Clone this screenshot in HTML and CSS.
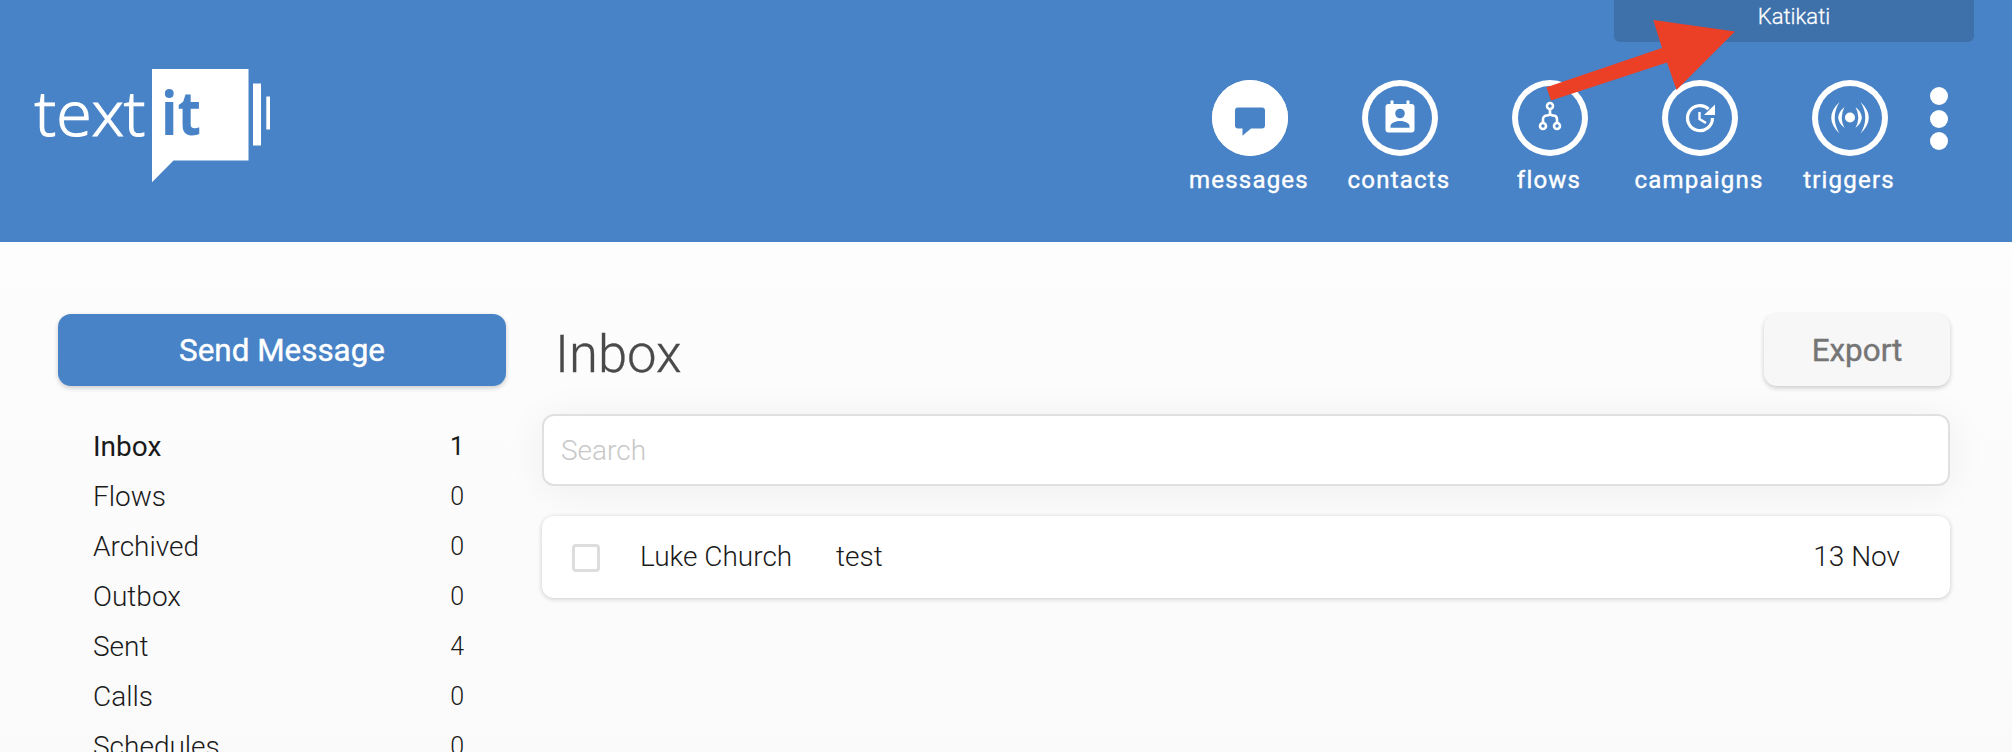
FILE: index.html
```html
<!DOCTYPE html>
<html lang="en">
<head>
<meta charset="utf-8">
<title>TextIt - Inbox</title>
<link rel="stylesheet" href="styles.css">
</head>
<body>
<header class="header">
  <svg class="logo" width="250" height="130" viewBox="30 60 250 130" role="img" aria-label="textit">
    <path class="fill-white" d="M152 69H248.500V160.500H173.500L152 182.300ZM253 83.500h8v62h-8ZM266.300 96.500h3.700v33h-3.700Z"/>
    <text class="logo-thin" x="34.500" y="136" textLength="111" lengthAdjust="spacingAndGlyphs">text</text>
    <text class="logo-bold" x="161" y="135" textLength="40" lengthAdjust="spacingAndGlyphs">it</text>
  </svg>
  <nav class="nav">
    <a class="nav-item">
      <span class="ring ring-active"><svg width="76" height="76" viewBox="-38 -38 76 76"><path class="fill-blue" d="M-12-10.500H12a3 3 0 0 1 3 3V7.500a3 3 0 0 1-3 3H1L-7.500 17.800V10.500H-12a3 3 0 0 1-3-3V-7.500a3 3 0 0 1 3-3Z"/></svg></span>
      <span class="nav-label">messages</span>
    </a>
    <a class="nav-item">
      <span class="ring"><svg width="76" height="76" viewBox="-38 -38 76 76"><path class="fill-white" d="M-9.500-17.500h3v3.500H6.500v-3.500h3v3.500H11.500a3 3 0 0 1 3 3V11.500a3 3 0 0 1-3 3H-11.500a3 3 0 0 1-3-3V-11a3 3 0 0 1 3-3h2Z"/><circle class="fill-blue" cx="0" cy="-4.500" r="4.800"/><path class="fill-blue" d="M-9.500 9.800V8C-9.500 4.500-3.500 3 0 3S9.500 4.500 9.500 8V9.800Z"/></svg></span>
      <span class="nav-label">contacts</span>
    </a>
    <a class="nav-item">
      <span class="ring"><svg width="76" height="76" viewBox="-38 -38 76 76"><g class="stroke-icon"><circle cx="0" cy="-12" r="3"/><circle cx="-7" cy="8" r="3"/><circle cx="7" cy="8" r="3"/><path d="M0-9V-4M-7 5V1.500C-7-1.500-5-2.500-3-2.500C-1-2.500 0-3.500 0-5C0-3.500 1-2.500 3-2.500C5-2.500 7-1.500 7 1.500V5"/></g></svg></span>
      <span class="nav-label">flows</span>
    </a>
    <a class="nav-item">
      <span class="ring"><svg width="76" height="76" viewBox="-38 -38 76 76"><g class="stroke-icon clock"><path d="M12.500 0A12.500 12.500 0 1 1 8.600-9"/><path class="hand" d="M-.500-6V1L6 5"/></g><path class="fill-white" d="M15-13.500V-3H4Z"/></svg></span>
      <span class="nav-label">campaigns</span>
    </a>
    <a class="nav-item">
      <span class="ring"><svg width="76" height="76" viewBox="-38 -38 76 76"><circle class="fill-white" cx="0" cy="-.500" r="5"/><path class="fill-white" d="M-10.500-16Q-27-.500-10.500 15.500Q-20-.500-10.500-16ZM10.500-16Q27-.500 10.500 15.500Q20-.500 10.500-16ZM-5.500-11Q-18-.500-5.500 10Q-11-.500-5.500-11ZM5.500-11Q18-.500 5.500 10Q11-.500 5.500-11Z"/></svg></span>
      <span class="nav-label">triggers</span>
    </a>
    <div class="more"><i></i><i></i><i></i></div>
  </nav>
  <div class="org">Katikati</div>
  <svg class="arrow" width="200" height="90" viewBox="1540 15 200 90"><path d="M1735 31.500 1653.300 20 1662 48 1546.500 87.300 1551 100.500 1667 62.500 1676.500 90Z"/></svg>
</header>
<main class="content">
  <aside class="side">
    <button class="btn btn-primary">Send Message</button>
    <ul class="folders">
      <li class="selected"><span>Inbox</span><b>1</b></li>
      <li><span>Flows</span><b>0</b></li>
      <li><span>Archived</span><b>0</b></li>
      <li><span>Outbox</span><b>0</b></li>
      <li><span>Sent</span><b>4</b></li>
      <li><span>Calls</span><b>0</b></li>
      <li><span>Schedules</span><b>0</b></li>
    </ul>
  </aside>
  <section class="main">
    <div class="title-row"><h1>Inbox</h1><button class="btn btn-export">Export</button></div>
    <div class="search">Search</div>
    <div class="message">
      <span class="check"></span>
      <span class="name">Luke Church</span>
      <span class="text">test</span>
      <span class="date">13 Nov</span>
    </div>
  </section>
</main>
</body>
</html>
```
FILE: styles.css
```css
* { box-sizing: border-box; }
html, body { height: 752px; overflow: hidden; }
body {
  margin: 0;
  font-family: Roboto, "Liberation Sans", sans-serif;
  font-weight: 300;
  font-size: 28px;
  color: #1a1a1a;
  background: linear-gradient(#fdfdfd 242px, #fafafa 752px);
}
.header {
  position: relative;
  height: 242px;
  background: #4883c7;
  display: flex;
  justify-content: space-between;
  padding: 60px 48px 0 30px;
}
.logo { display: block; }
.fill-white { fill: #fff; }
.fill-blue { fill: #4883c7; }
.logo-thin { font: 300 62px "Open Sans", sans-serif; fill: #fff; stroke: #fff; stroke-width: 1.2px; }
.logo-bold { font: 700 60px "Open Sans", sans-serif; fill: #4883c7; }
.nav { display: flex; padding-top: 20px; }
.nav-item { width: 150px; display: flex; flex-direction: column; align-items: center; }
.ring { width: 76px; height: 76px; border-radius: 50%; box-shadow: inset 0 0 0 6px #fff; }
.ring svg { display: block; }
.ring-active { background: #fff; }
.stroke-icon { fill: none; stroke: #fff; stroke-width: 2.6; }
.clock { stroke-width: 3.2; }
.hand { stroke-width: 2.4; }
.nav-label {
  margin-top: 9px;
  padding-right: 2px;
  font-size: 24px;
  line-height: 30px;
  font-weight: 400;
  letter-spacing: 1.2px;
  color: #fff;
  -webkit-text-stroke: .4px #fff;
}
.more { width: 39px; padding: 7px 0 0 5px; display: flex; flex-direction: column; gap: 4.5px; }
.more i { width: 18px; height: 18px; border-radius: 50%; background: #fff; }
.org {
  position: absolute;
  top: 0;
  right: 38px;
  width: 360px;
  height: 42px;
  border-radius: 0 0 6px 6px;
  background: #3e70aa;
  color: #fff;
  font-size: 22px;
  line-height: 33px;
  text-align: center;
  -webkit-text-stroke: .3px #fff;
}
.arrow { position: absolute; left: 1540px; top: 15px; }
.arrow path { fill: #eb4026; }
.content { display: flex; gap: 36px; padding: 72px 62px 0 58px; }
.side { width: 448px; }
.btn {
  display: block;
  height: 72px;
  border: 0;
  border-radius: 13px;
  padding: 0;
  font-family: inherit;
  font-size: 31.4px;
  font-weight: 400;
  -webkit-text-stroke: .4px currentColor;
  box-shadow: 0 2px 5px rgba(0, 0, 0, .2);
}
.btn-primary { width: 100%; background: #4883c7; color: #fff; }
.btn-export { width: 186px; background: #f7f7f7; color: #757575; }
.folders { list-style: none; margin: 36px 0 0; padding: 0 42px 0 35px; }
.folders li { display: flex; justify-content: space-between; height: 50px; line-height: 50px; }
.folders b { font-weight: 300; font-size: 25px; line-height: 49px; }
.folders .selected, .folders .selected b { font-weight: 400; }
.main { flex: 1; }
.title-row { display: flex; justify-content: space-between; height: 72px; }
h1 { margin: 0 0 0 13px; font-size: 52.6px; font-weight: 300; line-height: 80px; color: #4a4a4a; -webkit-text-stroke: .3px currentColor; }
.search {
  height: 72px;
  margin-top: 28px;
  border: 2px solid #e0e0e0;
  border-radius: 12px;
  background: #fff;
  padding-left: 17px;
  line-height: 69px;
  color: #c8c8c8;
  box-shadow: 0 4px 40px rgba(0, 0, 0, .06);
}
.message {
  position: relative;
  display: flex;
  align-items: center;
  height: 82px;
  margin-top: 30px;
  padding: 0 50px 0 30px;
  border-radius: 12px;
  background: #fff;
  line-height: 80px;
  box-shadow: 0 1px 5px rgba(0, 0, 0, .2);
}
.check { width: 28px; height: 28px; margin-top: 2px; border: 3px solid #ddd; border-radius: 4px; }
.name { margin-left: 40px; width: 196px; }
.date { margin-left: auto; }
```
